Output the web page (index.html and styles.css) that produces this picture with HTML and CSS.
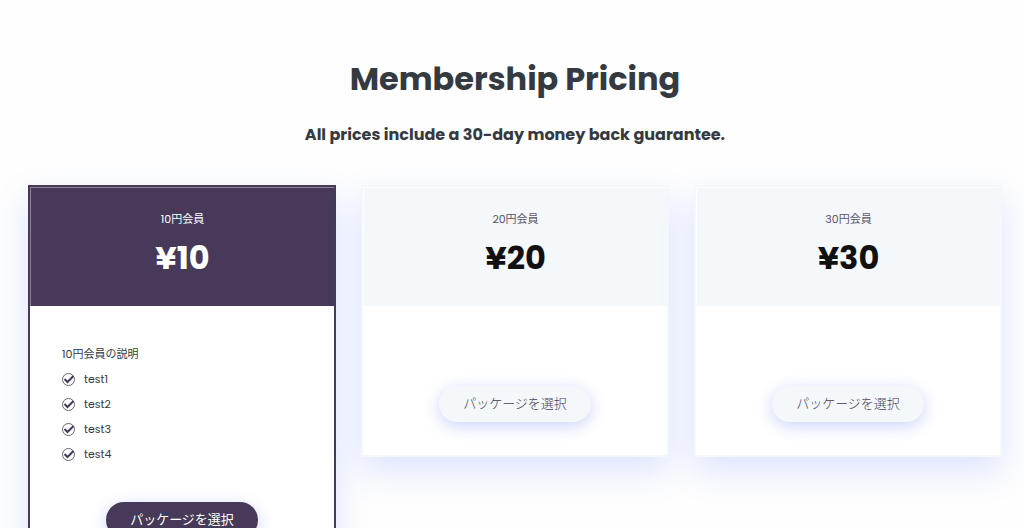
FILE: index.html
```html
<!DOCTYPE html>
<html lang="ja">
<head>
    <meta charset="UTF-8">
    <meta name="viewport" content="width=device-width, initial-scale=1.0">
    <title>Membership Pricing</title>
    <link rel="stylesheet" href="styles.css">
</head>
<body>
    <svg class="sprite" aria-hidden="true">
        <symbol id="check" viewBox="0 0 26 26">
            <circle cx="13" cy="13" r="12" fill="none" stroke="currentColor" stroke-width="1.6"/>
            <path d="M5 12l6 6L23 6" fill="none" stroke="currentColor" stroke-width="4"/>
        </symbol>
    </svg>

    <header class="heading">
        <h1>Membership Pricing</h1>
        <h2>All prices include a 30-day money back guarantee.</h2>
    </header>

    <main class="plans">
        <section class="plan featured">
            <div class="plan-head">
                <h3>10円会員</h3>
                <p class="price">¥10</p>
            </div>
            <div class="plan-body">
                <div class="details">
                    <p>10円会員の説明</p>
                    <ul>
                        <li><svg class="icon"><use href="#check"/></svg>test1</li>
                        <li><svg class="icon"><use href="#check"/></svg>test2</li>
                        <li><svg class="icon"><use href="#check"/></svg>test3</li>
                        <li><svg class="icon"><use href="#check"/></svg>test4</li>
                    </ul>
                </div>
                <button type="button">パッケージを選択</button>
            </div>
        </section>

        <section class="plan">
            <div class="plan-head">
                <h3>20円会員</h3>
                <p class="price">¥20</p>
            </div>
            <div class="plan-body">
                <button type="button">パッケージを選択</button>
            </div>
        </section>

        <section class="plan">
            <div class="plan-head">
                <h3>30円会員</h3>
                <p class="price">¥30</p>
            </div>
            <div class="plan-body">
                <button type="button">パッケージを選択</button>
            </div>
        </section>
    </main>
</body>
</html>
```

FILE: styles.css
```css
* {
    box-sizing: border-box;
}
body {
    margin: 0;
    padding: 56px 22px 48px 28px;
    font-family: Poppins, Inter, "Noto Sans CJK JP", sans-serif;
    font-size: 11px;
    color: #343a40;
    background-color: #fefefe;
}
h1, h2, h3, p, ul {
    margin: 0;
    padding: 0;
}
.sprite {
    display: none;
}
.heading {
    text-align: center;
}
h1 {
    font-size: 32px;
    line-height: 46px;
    font-weight: 700;
}
h2 {
    margin-top: 21px;
    font-size: 16px;
    line-height: 24px;
    font-weight: 700;
}
.plans {
    display: grid;
    grid-template-columns: repeat(3, 1fr);
    gap: 25px;
    align-items: start;
    margin-top: 38px;
}
.plan {
    border: 2px solid #f4f8fb;
    background-color: #fff;
    box-shadow: 0 14px 32px rgba(65, 110, 255, 0.18);
}
.plan-head {
    height: 119px;
    padding-top: 21px;
    text-align: center;
    background-color: #f4f8fb;
    border: 1px solid #fbfdfe;
    border-width: 1px 0 0 1px;
}
h3 {
    font-size: 11px;
    line-height: 20px;
    font-weight: 400;
    color: #5c5468;
}
.price {
    margin-top: 7px;
    font-size: 32px;
    line-height: 44px;
    font-weight: 700;
    color: #111;
}
.plan-body {
    padding: 80px 32px 33px;
    text-align: center;
}
button {
    height: 36px;
    padding: 0 24px;
    border: none;
    border-radius: 18px;
    font-family: inherit;
    font-size: 13px;
    line-height: 34px;
    font-weight: 300;
    color: #463a58;
    background-color: #f4f8fb;
    box-shadow: 0 4px 16px rgba(65, 100, 240, 0.28);
    cursor: pointer;
}
.featured {
    border-color: #463a58;
}
.featured .plan-head {
    background-color: #463a58;
    border-color: #8b8298;
}
.featured h3, .featured .price {
    color: #fff;
}
.featured .plan-body {
    padding-top: 36px;
}
.details {
    margin-bottom: 35px;
    text-align: left;
    line-height: 25px;
}
.details li {
    display: flex;
    align-items: center;
    gap: 9px;
    list-style-type: none;
}
.icon {
    width: 13px;
    height: 13px;
    color: #463a58;
}
.featured button {
    font-weight: 400;
    color: #fff;
    background-color: #463a58;
}
@media (max-width: 700px) {
.plans {
    grid-template-columns: 1fr;
}
}
```
